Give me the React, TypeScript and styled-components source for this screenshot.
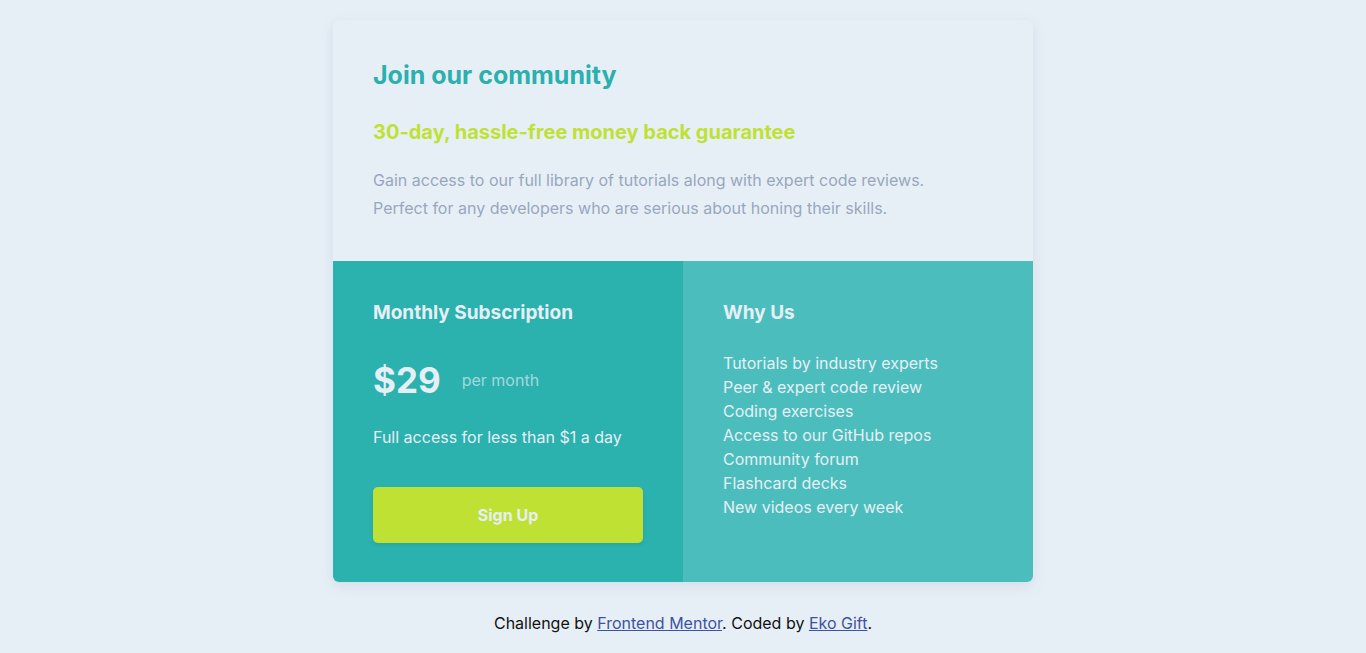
import React from "react";
import styled, { createGlobalStyle } from "styled-components";

const Global = createGlobalStyle`
  html, body { margin: 0; padding: 0; }
  body {
    background: #e7eff6;
    font-family: Inter, "Noto Sans", sans-serif;
    -webkit-font-smoothing: antialiased;
  }
`;

const Page = styled.main`
  display: flex;
  flex-direction: column;
  align-items: center;
  padding-top: 20px;
`;

const Card = styled.section`
  width: 700px;
  border-radius: 6px;
  overflow: hidden;
  background: #e7eff6;
  box-shadow: 0 4px 14px rgba(70, 100, 140, 0.12);
`;

const Top = styled.div`
  padding: 40px 40px 39px;
`;

const Title = styled.h1`
  margin: 0;
  font-size: 25px;
  line-height: 30px;
  font-weight: 700;
  color: #2bb0ae;
`;

const Sub = styled.h2`
  margin: 30px 0 0;
  font-size: 20px;
  line-height: 24px;
  font-weight: 700;
  color: #bfe133;
`;

const Para = styled.p`
  margin: 22px 0 0;
  font-size: 16px;
  line-height: 28px;
  color: #98a7be;
`;

const Bottom = styled.div`
  display: grid;
  grid-template-columns: 1fr 1fr;
`;

const Col = styled.div<{ $bg: string }>`
  background: ${(p) => p.$bg};
  padding: 40px 40px 39px;
  color: #e7eff6;
`;

const ColTitle = styled.h3`
  margin: 0;
  font-size: 19px;
  line-height: 24px;
  font-weight: 700;
`;

const PriceRow = styled.div`
  display: flex;
  align-items: center;
  gap: 21px;
  margin-top: 35px;
`;

const Price = styled.span`
  font-size: 35px;
  line-height: 40px;
  font-weight: 700;
`;

const Per = styled.span`
  font-size: 16px;
  line-height: 24px;
  color: rgba(231, 239, 246, 0.65);
`;

const Text = styled.p`
  margin: 25px 0 0;
  font-size: 16px;
  line-height: 24px;
`;

const Button = styled.button`
  display: block;
  width: 270px;
  height: 56px;
  margin-top: 38px;
  border: none;
  border-radius: 5px;
  background: #bfe133;
  color: #e7eff6;
  font-family: inherit;
  font-size: 16px;
  font-weight: 700;
  cursor: pointer;
  box-shadow: 0 2px 4px rgba(0, 0, 0, 0.06);
`;

const List = styled.ul`
  list-style: none;
  margin: 26px 0 0;
  padding: 0;
  font-size: 16px;
  line-height: 24px;
`;

const Footer = styled.p`
  margin: 29px 0 0;
  font-size: 16px;
  line-height: 24px;
  color: #111;
`;

const Link = styled.a`
  color: #3e52a3;
`;

const items = [
  "Tutorials by industry experts",
  "Peer & expert code review",
  "Coding exercises",
  "Access to our GitHub repos",
  "Community forum",
  "Flashcard decks",
  "New videos every week",
];

export default function App() {
  return (
    <>
      <Global />
      <Page>
        <Card>
          <Top>
            <Title>Join our community</Title>
            <Sub>30-day, hassle-free money back guarantee</Sub>
            <Para>
              Gain access to our full library of tutorials along with expert code reviews.
              <br />
              Perfect for any developers who are serious about honing their skills.
            </Para>
          </Top>
          <Bottom>
            <Col $bg="#2bb1ae">
              <ColTitle>Monthly Subscription</ColTitle>
              <PriceRow>
                <Price>$29</Price>
                <Per>per month</Per>
              </PriceRow>
              <Text>Full access for less than $1 a day</Text>
              <Button>Sign Up</Button>
            </Col>
            <Col $bg="#4bbdbc">
              <ColTitle>Why Us</ColTitle>
              <List>
                {items.map((i) => (
                  <li key={i}>{i}</li>
                ))}
              </List>
            </Col>
          </Bottom>
        </Card>
        <Footer>
          Challenge by <Link href="#">Frontend Mentor</Link>. Coded by <Link href="#">Eko Gift</Link>.
        </Footer>
      </Page>
    </>
  );
}
